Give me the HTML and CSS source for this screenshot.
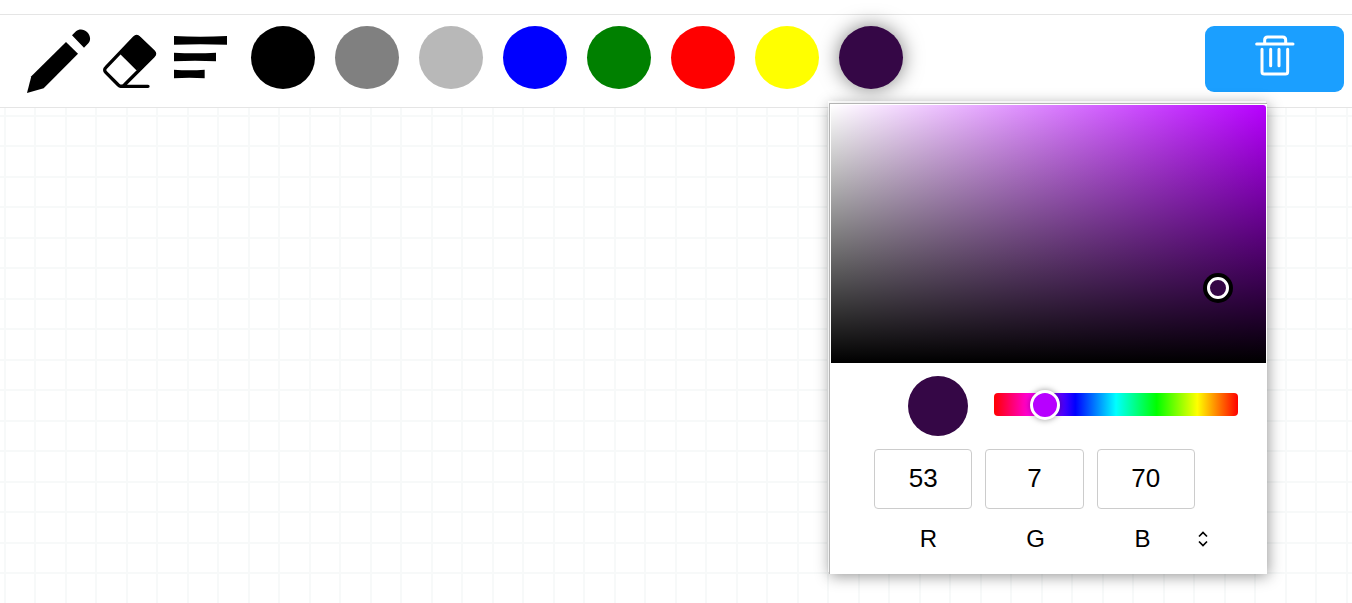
FILE: index.html
```html
<!DOCTYPE html>
<html lang="en">
<head>
<meta charset="utf-8">
<meta name="viewport" content="width=device-width, initial-scale=1">
<title>Drawing board</title>
<link rel="stylesheet" href="styles.css">
</head>
<body>
<header class="toolbar">
  <div class="tools">
    <button class="tool tool-pencil" aria-label="Pencil">
      <svg width="64" height="64" viewBox="81 88 192 192"><path d="M81 280L94 230L198 127L234 162L131 266Z"/><path d="M216 107L228 95C237 87 252 88 261 97C272 108 273 122 265 131L252 144Z"/></svg>
    </button>
    <button class="tool tool-eraser" aria-label="Eraser">
      <svg width="54" height="54" viewBox="309 102 162 162"><path d="M362 159L403 109Q410 102 417 109L464 154Q471 161 464 168L411 211Z"/><path d="M403 113Q410 106 417 113L460 154Q467 161 460 168L373 255Q364 263 355 255L318 218Q310 210 318 202ZM362 259H444" fill="none" stroke="#000" stroke-width="10" stroke-linecap="round"/><path d="M362 160L411 209" stroke="#000" stroke-width="5"/></svg>
    </button>
    <button class="tool tool-width" aria-label="Line width">
      <svg width="53" height="43" viewBox="522 109 159 129"><path d="M522 109Q600 114 681 109V135Q600 132 522 135ZM522 159Q585 163 648 159V185Q585 182 522 185ZM522 210Q568 214 614 210V236Q568 232 522 236Z"/></svg>
    </button>
  </div>
  <div class="swatches">
    <button class="swatch black" aria-label="Black"></button>
    <button class="swatch gray" aria-label="Gray"></button>
    <button class="swatch silver" aria-label="Silver"></button>
    <button class="swatch blue" aria-label="Blue"></button>
    <button class="swatch green" aria-label="Green"></button>
    <button class="swatch red" aria-label="Red"></button>
    <button class="swatch yellow" aria-label="Yellow"></button>
    <div class="custom">
      <button class="swatch plum active" aria-label="Custom colour" aria-expanded="true"></button>
      <section class="picker" aria-label="Colour picker">
        <div class="shade"><button class="shade-handle" aria-label="Shade"></button></div>
        <div class="mix">
          <div class="preview"></div>
          <input class="hue" type="range" min="0" max="360" value="61" aria-label="Hue">
        </div>
        <div class="channels">
          <input id="r" type="text" value="53">
          <input id="g" type="text" value="7">
          <input id="b" type="text" value="70">
        </div>
        <div class="names">
          <label for="r">R</label>
          <label for="g">G</label>
          <label for="b">B</label>
          <button class="format" aria-label="Change format">
            <svg width="10" height="16" viewBox="0 0 10 16"><path d="M1 5.5L5 1.5L9 5.5M1 10.5L5 14.5L9 10.5" fill="none" stroke="#000" stroke-width="1.7"/></svg>
          </button>
        </div>
      </section>
    </div>
  </div>
  <button class="clear" aria-label="Clear drawing">
    <svg width="40" height="41" viewBox="194 75 120 123" fill="none" stroke="#fff" stroke-width="9" stroke-linecap="round" stroke-linejoin="round"><path d="M199 102H308M223 100V90Q223 81 232 81H277Q286 81 286 90V100"/><path d="M215 118V185Q215 192 222 192H285Q292 192 292 185V118M241 118V167M266 118V167"/></svg>
  </button>
</header>
<main class="board"></main>
</body>
</html>
```
FILE: styles.css
```css
* {
  box-sizing: border-box;
}

body {
  margin: 0;
  min-height: 100vh;
  padding-top: 14px;
  display: flex;
  flex-direction: column;
  background: #fff;
  font-family: "Liberation Sans", Arial, sans-serif;
  color: #000;
}

button {
  padding: 0;
  border: 0;
  background: none;
  font: inherit;
  cursor: pointer;
}

svg {
  display: block;
}

.toolbar {
  display: flex;
  align-items: flex-start;
  padding: 11px 8px 14px 27px;
  border-top: 1px solid #e5e5e5;
  border-bottom: 1px solid #e5e5e5;
}

.tools {
  display: flex;
  align-items: flex-start;
  margin-right: 24px;
}

.tool-pencil {
  margin-top: 3px;
  margin-right: 12px;
}

.tool-eraser {
  margin-top: 8px;
  margin-right: 17px;
}

.tool-width {
  margin-top: 10px;
}

.swatches {
  display: flex;
  gap: 20px;
}

.swatch {
  display: block;
  width: 64px;
  height: 63px;
  border-radius: 50%;
}

.black { background: #000; }
.gray { background: #808080; }
.silver { background: #b8b8b8; }
.blue { background: #00f; }
.green { background: #008000; }
.red { background: #f00; }
.yellow { background: #ff0; }
.plum { background: #350746; }

.active {
  box-shadow: 0 0 20px rgba(0, 0, 0, 0.5);
}

.custom {
  position: relative;
}

.clear {
  display: flex;
  justify-content: center;
  width: 139px;
  height: 66px;
  margin-left: auto;
  padding-top: 9px;
  border-radius: 9px;
  background: #1b9fff;
}

.board {
  flex: 1;
  background-image:
    linear-gradient(90deg, #f7f9f9 2px, transparent 2px 30px, #f7f9f9 30px 32px, transparent 32px),
    linear-gradient(#f7f9f9 2px, transparent 2px 30px, #f7f9f9 30px 32px, transparent 32px);
  background-size: 61px 61px;
  background-position: 4px 7px;
}

.picker {
  position: absolute;
  top: 77px;
  left: -10px;
  z-index: 1;
  width: 438px;
  padding: 1px 1px 21px;
  border-top: 1px solid #b4b4b4;
  border-left: 1px solid #b4b4b4;
  background: #fff;
  box-shadow: -1px -2px 0 rgba(255, 255, 255, 0.7), 1px 2px 14px rgba(0, 0, 0, 0.42);
}

.shade {
  position: relative;
  height: 258px;
  border-radius: 3px 3px 0 0;
  background:
    linear-gradient(transparent, #000),
    linear-gradient(90deg, #fff, #b700ff);
}

.shade-handle {
  position: absolute;
  top: 71%;
  left: 89%;
  width: 22px;
  height: 22px;
  margin: -11px;
  border: 3px solid #fff;
  border-radius: 50%;
  background: #350746;
  box-shadow: 0 0 0 4px #000;
}

.mix {
  display: flex;
  align-items: center;
  gap: 26px;
  padding: 13px 28px 13px 77px;
}

.preview {
  width: 60px;
  height: 60px;
  border-radius: 50%;
  background: #350746;
}

.hue {
  flex: 1;
  min-width: 0;
  height: 23px;
  margin: 0 0 3px;
  appearance: none;
  border-radius: 4px;
  background: linear-gradient(90deg, #f00, #f0f, #00f, #0ff, #0f0, #ff0, #f00);
}

.hue::-webkit-slider-thumb {
  appearance: none;
  width: 30px;
  height: 30px;
  border: 3px solid #fff;
  border-radius: 50%;
  background: #b700ff;
  box-shadow: 0 0 6px rgba(0, 0, 0, 0.4);
}

.channels {
  display: grid;
  grid-template-columns: repeat(3, 1fr);
  gap: 13px;
  padding: 0 71px 0 43px;
}

.channels input {
  width: 100%;
  min-width: 0;
  height: 60px;
  padding: 0 0 2px;
  border: 1px solid #ccc;
  border-radius: 4px;
  background: #fff;
  color: #000;
  font: 26px "Liberation Sans", Arial, sans-serif;
  text-align: center;
}

.names {
  display: flex;
  align-items: center;
  margin-top: 16px;
  padding: 0 58px 0 44px;
  font-size: 24px;
  line-height: 28px;
  text-align: center;
}

.names label {
  flex: 1;
}

.format {
  margin-left: 2px;
}
```
